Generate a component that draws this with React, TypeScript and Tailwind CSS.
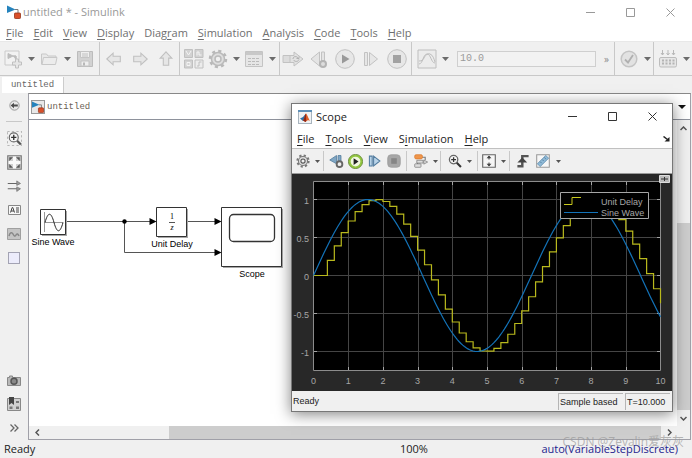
import type { ReactNode } from "react";
import clsx from "clsx";

const menus = ["File", "Edit", "View", "Display", "Diagram", "Simulation", "Analysis", "Code", "Tools", "Help"];

// Underlined letter per menu, when it is not the first one
const mnemonics: Record<string, number> = { Diagram: 4 };

const MenuLabel = ({ text, at }: { text: string; at: number }) => (
  <>
    {text.slice(0, at)}
    <span className="underline underline-offset-2">{text[at]}</span>
    {text.slice(at + 1)}
  </>
);

const Group = ({ children, className }: { children: ReactNode; className?: string }) => (
  <div className={clsx("flex shrink-0 items-center border-r border-[#c8c8c8]", className)}>{children}</div>
);

const Tool = ({ label, className, children }: { label: string; className: string; children: ReactNode }) => (
  <button type="button" aria-label={label} className={clsx("flex shrink-0 items-center justify-center", className)}>
    {children}
  </button>
);

const Caret = ({ label, small }: { label: string; small?: boolean }) => (
  <Tool label={label} className={small ? "h-5 w-2.5" : "h-6 w-3"}>
    <svg width={small ? 5 : 7} height={small ? 3 : 4} viewBox="0 0 7 4">
      <path d="M0 0h7L3.5 4z" fill={small ? "#555" : "#6b6b6b"} />
    </svg>
  </Tool>
);

const Icon = ({ children, size = 20 }: { children: ReactNode; size?: number }) => (
  <svg width={size} height={size} viewBox="0 0 20 20" fill="none">
    {children}
  </svg>
);

const ModelLogo = () => (
  <svg width="14" height="14" viewBox="0 0 14 14">
    <path d="M0 0.5 8.5 4.5 0 8z" fill="#2583bd" />
    <path d="M8 4.5h3v4" fill="none" stroke="#777" />
    <rect x="7.5" y="8" width="6" height="5.5" rx="0.8" fill="#d9502a" stroke="#963418" strokeWidth="0.8" />
  </svg>
);

const MatlabLogo = () => (
  <svg width="14" height="14" viewBox="0 0 14 14">
    <rect x="0.5" y="0.5" width="13" height="13" fill="#f0f2f4" stroke="#a8b4be" />
    <path d="M0 0h14v2H0z" fill="#5d8fb8" />
    <path d="m2 8.5 3-1.5 2.5-3L7 10l-2 1z" fill="#2d6fa8" />
    <path d="M5 10.5C6.5 9 7 4 8 3.5c1 .5 2.5 5 4 7.5-1.5-1-2.5-1-4.500 1z" fill="#e0612b" />
    <path d="M5 10.5C6.5 9 7 4 8 3.5L8.2 11l-.7 1z" fill="#8d2718" />
  </svg>
);

const WindowButtons = ({ color }: { color: string }) => (
  <div className={clsx("flex", color)}>
    <Tool label="Minimize" className="h-6 w-10">
      <svg width="9" height="9" stroke="currentColor"><path d="M0 4.5h9" /></svg>
    </Tool>
    <Tool label="Maximize" className="h-6 w-10">
      <svg width="9" height="9" stroke="currentColor" fill="none"><path d="M.5.5h8v8h-8z" /></svg>
    </Tool>
    <Tool label="Close" className="h-6 w-10">
      <svg width="9" height="9" stroke="currentColor"><path d="m.5.5 8 8m0-8-8 8" /></svg>
    </Tool>
  </div>
);

const MainToolbar = () => (
  <div className="flex h-[35px] border-t border-b border-t-[#e8e8e8] border-b-[#c8c8c8] bg-[#f0f0f0]">
    <Group className="pr-0.5 pl-px">
      <Tool label="New model" className="size-6">
        <Icon>
          <path d="M2 2h14v14H2z" stroke="#cacaca" fill="#f2f2f2" />
          <path d="M5 4.5 10 7 5 9.5zM10 7h3v4" stroke="#bcbcbc" fill="#bcbcbc" />
          <path d="M10 7h3v4" stroke="#bcbcbc" />
          <path d="M12.5 10h3v3h3v3h-3v3h-3v-3h-3v-3h3z" stroke="#c0c0c0" fill="#e6e6e6" />
        </Icon>
      </Tool>
      <Caret label="New options" />
      <Tool label="Open" className="size-6">
        <Icon>
          <path d="M2.5 15.5V5h5L9 7h8v2" stroke="#c8c8c8" fill="#e8e8e8" />
          <path d="M4.500 8.5H18l-1.500 7H3z" stroke="#c8c8c8" fill="#ececec" />
        </Icon>
      </Tool>
      <Caret label="Open options" />
      <Tool label="Save" className="size-6">
        <Icon>
          <path d="M2.5 2.5h15v15h-15z" stroke="#bcbcbc" fill="#d2d2d2" />
          <path d="M5.5 2.500h9v6h-9zM6 12h8v5H6z" fill="#eee" stroke="#c4c4c4" />
          <path d="M7 5h6M7 7h6" stroke="#c0c0c0" />
          <path d="M8 13.5h2v3H8z" fill="#b8b8b8" />
        </Icon>
      </Tool>
    </Group>
    <Group className="pl-px">
      {[0, 180, 90].map((turn) => (
        <Tool key={turn} label={{ 0: "Back", 180: "Forward", 90: "Up to parent" }[turn] as string} className="h-6 w-[26px]">
          <Icon size={18}>
            <path d="M2 10 9 3.500V7h8v6H9v3.500z" transform={`rotate(${turn} 10 10)`} stroke="#c0c0c0" strokeWidth="1.2" fill="#e6e6e6" />
          </Icon>
        </Tool>
      ))}
    </Group>
    <Group className="pr-px pl-0.5">
      <Tool label="Library browser" className="size-6">
        <Icon>
          <path d="M.5.5h8v8h-8zM11 .5h8v8h-8zM.5 11h8v8h-8z" fill="#d2d2d2" stroke="#c0c0c0" />
          <path d="M11 11h8v8h-8z" fill="#ececec" stroke="#c0c0c0" />
          <path d="m2 2 2.5 4L7 2M13 6.500V3h2v3h2.500M3 13.5h3v3H3z" stroke="#f4f4f4" />
          <path d="M13 17h2v-4h2.500" stroke="#c0c0c0" />
        </Icon>
      </Tool>
      <Tool label="Model configuration" className="size-6">
        <Icon>
          <circle cx="10" cy="10" r="8" stroke="#b8b8b8" strokeWidth="2.500" strokeDasharray="3.1 3.18" />
          <circle cx="10" cy="10" r="6.500" fill="#dedede" stroke="#bababa" strokeWidth="1.500" />
          <circle cx="10" cy="10" r="3" fill="#f0f0f0" stroke="#bababa" strokeWidth="1.500" />
        </Icon>
      </Tool>
      <Caret label="Configuration options" />
      <Tool label="Model explorer" className="size-6">
        <Icon>
          <path d="M1.5 2.5h17v15h-17z" fill="#e6e6e6" stroke="#c4c4c4" />
          <path d="M2 4.5h16" stroke="#c8c8c8" strokeWidth="3" />
          <path d="M4 9.5h12M4 12.5h12M4 15.5h12" stroke="#bababa" strokeDasharray="3 1" />
        </Icon>
      </Tool>
      <Caret label="Explorer options" />
    </Group>
    <Group className="pr-px">
      <Tool label="Fast restart" className="h-6 w-[26px]">
        <svg width="22" height="20" viewBox="0 0 22 20" fill="none">
          <path d="M1 6.5h9v7H1z" fill="#dcdcdc" stroke="#c2c2c2" />
          <path d="M8 6.5h4V3l9 7-9 7v-3.500H8z" fill="#e2e2e2" stroke="#c2c2c2" strokeLinejoin="round" />
          <path d="M11 10c0-3 4-3 5-1M17 7.500V9.500h-2.500M17 10.500c-1 2.500-4 2.500-5.500.5" stroke="#b0b0b0" />
        </svg>
      </Tool>
      <Tool label="Step back" className="h-6 w-[26px]">
        <Icon>
          <path d="M2 10 10.5 3v14zM12.5 3h3v9h-3z" fill="#e4e4e4" stroke="#c2c2c2" />
          <circle cx="14" cy="15" r="3" fill="#ddd" stroke="#b4b4b4" strokeWidth="2" />
        </Icon>
      </Tool>
      <Tool label="Run" className="h-6 w-[26px]">
        <Icon>
          <circle cx="10" cy="10" r="9.300" fill="#e7e7e7" stroke="#c0c0c0" />
          <path d="M7 5.5 14.5 10 7 14.5z" fill="#999" />
        </Icon>
      </Tool>
      <Tool label="Step forward" className="h-6 w-[26px]">
        <Icon>
          <path d="M3.500 3.500h3v13h-3zM8.500 3.500l8 6.500-8 6.500z" fill="#e6e6e6" stroke="#c2c2c2" />
        </Icon>
      </Tool>
      <Tool label="Stop" className="h-6 w-[26px]">
        <Icon>
          <circle cx="10" cy="10" r="9.300" fill="#e7e7e7" stroke="#c0c0c0" />
          <path d="M6 6h8v8H6z" fill="#a2a2a2" />
        </Icon>
      </Tool>
    </Group>
    <div className="flex min-w-0 flex-1 items-center border-r border-[#c8c8c8] pl-[3px]">
      <Tool label="Data inspector" className="size-6">
        <Icon>
          <path d="M1 1h18v18H1z" fill="#ececec" stroke="#bebebe" />
          <path d="M2 15C6 15 6 5 10 5s4 9 8 9M2 12c3 0 4-1 5-3s3-5 6-4 4 5 5 8" stroke="#bebebe" />
        </Icon>
      </Tool>
      <Caret label="Inspector options" />
      <input
        aria-label="Simulation stop time"
        defaultValue="10.0"
        className="ml-1.5 h-4 min-w-0 flex-1 border border-[#cfcfcf] bg-[#f2f2f2] px-0.5 font-['Liberation_Mono',monospace] text-[10px] text-[#9a9a9a]"
      />
      <button type="button" aria-label="More" className="w-[18px] pl-2 text-left text-[10px] leading-4 text-[#8a8a8a]">
        »
      </button>
    </div>
    <Group className="pl-0.5">
      <Tool label="Update diagram" className="size-6">
        <Icon>
          <circle cx="10" cy="10" r="7.800" fill="#e2e2e2" stroke="#c4c4c4" strokeWidth="1.500" />
          <path d="m6 10.5 3 3L14 6" stroke="#b0b0b0" strokeWidth="1.800" />
        </Icon>
      </Tool>
      <Caret label="Update options" />
    </Group>
    <div className="flex shrink-0 items-center pl-0.5">
      <Tool label="Build model" className="size-6">
        <Icon>
          <path d="M4.500 1v5M3 4l1.500 2L6 4M10 1v5M8.500 4 10 6l1.500-2M15.500 1v5M14 4l1.500 2L17 4" stroke="#b8b8b8" />
          <rect x="1.500" y="8.500" width="17" height="9.500" rx="1.500" fill="#e6e6e6" stroke="#bcbcbc" />
          <path d="M4 11.5h13M4 14.5h13" stroke="#b4b4b4" strokeWidth="2" strokeDasharray="2 1.5" />
        </Icon>
      </Tool>
      <Caret label="Build options" />
    </div>
  </div>
);

const Palette = () => (
  <aside className="flex w-7 shrink-0 flex-col items-center">
    <Tool label="Hide browser" className="h-6 w-7">
      <Icon size={11}>
        <circle cx="10" cy="10" r="8.500" fill="#e8e8e8" stroke="#8a8a8a" strokeWidth="1.500" />
        <path d="M3 10 9 5v3h7v4H9v3z" fill="#4a4a4a" />
      </Icon>
    </Tool>
    <div className="my-1 h-px w-4 bg-[#c8c8c8]" />
    <Tool label="Zoom" className="h-6 w-7">
      <Icon size={15}>
        <path d="M.5.5h19v19H.5z" stroke="#999" strokeDasharray="3 3" />
        <circle cx="9" cy="8.500" r="6" fill="#f6f6f6" stroke="#666" strokeWidth="1.500" />
        <path d="M9 5v7M5.500 8.500h7" stroke="#333" strokeWidth="1.800" />
        <path d="m13.500 13 5 5" stroke="#555" strokeWidth="3" />
      </Icon>
    </Tool>
    <Tool label="Fit to view" className="h-6 w-7">
      <Icon size={15}>
        <path d="M1 1h18v18H1z" fill="#d0d0d0" stroke="#777" strokeWidth="1.500" />
        <path d="M8 2h4v16H8zM2 8h16v4H2z" fill="#fafafa" />
        <path d="M3 3h5L3 8zM17 3v5l-5-5zM3 17v-5l5 5zM17 17h-5l5-5z" fill="#555" />
      </Icon>
    </Tool>
    <Tool label="Sample time colors" className="h-6 w-7">
      <Icon size={15}>
        <path d="M1 6h16M1 13h16" stroke="#666" strokeWidth="1.500" />
        <path d="m13 2.500 5 3.500-5 2.500zM13 10.500l5 2.500-5 3.500z" fill="#999" stroke="#777" />
      </Icon>
    </Tool>
    <Tool label="Annotation" className="h-6 w-7">
      <svg width="13" height="10" viewBox="0 0 13 10" fill="none">
        <path d="M.5.5h12v9H.5z" fill="#f8f8f8" stroke="#888" />
        <path d="m2.500 7.500 1.700-5h.6l1.700 5M3 6h3M8 3h3M8 5h3M8 7h3" stroke="#444" />
      </svg>
    </Tool>
    <Tool label="Image" className="h-6 w-7">
      <svg width="14" height="12" viewBox="0 0 14 12" fill="none">
        <path d="M.5.5h13v11H.5z" fill="#c4c4c4" stroke="#a0a0a0" />
        <path d="M2 8c1-4 3-4 4-2s2 3 3 1 2-1 3 1" stroke="#888" strokeWidth="1.500" />
      </svg>
    </Tool>
    <Tool label="Area" className="h-6 w-7">
      <span className="size-3 border border-[#a3a3b3] bg-[#ececfb]" />
    </Tool>
    <div className="flex-1" />
    <Tool label="Snapshot" className="h-6 w-7">
      <svg width="14" height="11" viewBox="0 0 14 11" fill="none">
        <path d="M.5 2.500h2V1h3v1.500h8v8H.5z" fill="#b8b8b8" stroke="#888" />
        <circle cx="7" cy="6.300" r="3" fill="#888" stroke="#555" strokeWidth="1.500" />
      </svg>
    </Tool>
    <Tool label="Bookmarks" className="h-6 w-7">
      <svg width="14" height="14" viewBox="0 0 14 14" fill="none">
        <path d="M.5 1.500h13v12H.5z" fill="#d0d0d0" stroke="#888" />
        <path d="M9 4h3v2H9zM2.500 9.500h3V12h-3zM9 9.500h3V12H9z" fill="#777" />
        <path d="M2 0h5v8L4.500 6 2 8z" fill="#444" />
      </svg>
    </Tool>
    <Tool label="More tools" className="h-6 w-7">
      <svg width="9" height="8" viewBox="0 0 9 8" fill="none" stroke="#666" strokeWidth="1.300">
        <path d="m.5.5 3.500 3.500L.5 7.500m4-7L8 4 4.500 7.500" />
      </svg>
    </Tool>
  </aside>
);

const Diagram = () => (
  <svg width="260" height="170" viewBox="0 0 260 170" className="font-['Liberation_Sans',Arial,sans-serif]" fontSize="9" textAnchor="middle">
    {/* block shadows */}
    <path d="M13 91h25v25H13zM129 89h30v29h-30zM194 89h60v59h-60z" fill="#a8a8a8" />
    <g fill="#fff" stroke="#333">
      <path d="M11.500 89.500h25v25h-25zM127.500 87.500h30v29h-30zM192.500 87.500h60v59h-60z" />
      <rect x="200.500" y="94.500" width="45" height="27" rx="4" strokeWidth="1.300" />
    </g>
    <path d="M15.500 92v20M15 102.500h19" stroke="#999" />
    <path d="M16 102.500c3-11 6-11 9 0s6 11 9 0" fill="none" stroke="#222" />
    <path d="M38 101.500h84M95.500 101.500v31h93M159 101.500h30" fill="none" stroke="#555" />
    <circle cx="95.500" cy="101.500" r="2.200" />
    <path d="m120.500 98 7 3.500-7 3.500zM185.500 98l7 3.500-7 3.500zM185.500 129l7 3.500-7 3.500z" />
    <g className="font-['Liberation_Serif',serif]" fontSize="8">
      <text x="143" y="99">1</text>
      <path d="M140 102.500h6" stroke="#555" />
      <text x="143" y="110" fontStyle="italic">z</text>
    </g>
    <text x="24" y="125">Sine Wave</text>
    <text x="143" y="127">Unit Delay</text>
    <text x="223" y="157">Scope</text>
  </svg>
);

const plotX = (t: number) => 21.5 + t * 34.7;
const plotY = (v: number) => 101.5 - v * 76;

const sinePath = Array.from({ length: 201 }, (_, i) => `${plotX(i / 20)},${plotY(Math.sin(i / 20))}`).join(" ");

// sampled every 0.2 s and held one sample late
const delayPath = Array.from({ length: 51 }, (_, k) => {
  const held = (n: number) => plotY(n < 1 ? 0 : Math.sin((n - 1) * 0.2));
  return `${k ? `H${plotX(k * 0.2)}V` : `M${plotX(0)} `}${held(k)}`;
}).join("");

const Plot = () => (
  <svg viewBox="0 0 380 217" className="block w-full bg-[#282828] font-['Liberation_Sans',Arial,sans-serif]" fontSize="9" fill="#a6a6a6">
    <path d="M21.500 7.500h347v189h-347z" fill="#000" />
    <g stroke="#454545">
      {[1, 2, 3, 4, 5, 6, 7, 8, 9].map((t) => (
        <path key={t} d={`M${Math.round(plotX(t)) + 0.5} 8v188`} />
      ))}
      {[1, 0.5, 0, -0.5, -1].map((v) => (
        <path key={v} d={`M22 ${plotY(v)}h346`} />
      ))}
    </g>
    <path d="M21.500 7.500h347v189h-347z" fill="none" stroke="#8c8c8c" />
    <g stroke="#a6a6a6">
      {[1, 2, 3, 4, 5, 6, 7, 8, 9].map((t) => (
        <path key={t} d={`M${Math.round(plotX(t)) + 0.5} 8v3m0 182v3`} />
      ))}
      {[1, 0.5, 0, -0.5, -1].map((v) => (
        <path key={v} d={`M22 ${plotY(v)}h3m340 0h3`} />
      ))}
    </g>
    <path d={delayPath} fill="none" stroke="#b9b91d" strokeWidth="1.200" />
    <polyline points={sinePath} fill="none" stroke="#1373b8" strokeWidth="1.200" />
    <g textAnchor="middle">
      {[0, 1, 2, 3, 4, 5, 6, 7, 8, 9, 10].map((t) => (
        <text key={t} x={plotX(t)} y="210">{t}</text>
      ))}
    </g>
    <g textAnchor="end">
      {[1, 0.5, 0, -0.5, -1].map((v) => (
        <text key={v} x="17" y={plotY(v) + 4}>{v}</text>
      ))}
    </g>
    {/* legend */}
    <path d="M268.500 18.500h88v26h-88z" fill="#000" stroke="#a6a6a6" />
    <path d="M272 30.500h8v-7h9" fill="none" stroke="#c9c91d" />
    <path d="M272 38.500h34" stroke="#1373b8" />
    <text x="309" y="31">Unit Delay</text>
    <text x="309" y="42">Sine Wave</text>
    <path d="M367.500 1.500h10v7h-10z" fill="#bbb" stroke="#ddd" />
    <path d="M369 5h7M372.500 3v4" stroke="#333" />
  </svg>
);

const ScopeWindow = () => (
  <section className="absolute top-[103px] right-[19px] w-[382px] border border-[#777] bg-white shadow-[0_2px_14px_rgba(0,0,0,0.5)]">
    <header className="flex h-[25px] items-center pl-[6px]">
      <MatlabLogo />
      <h2 className="flex-1 pl-1 text-[11px] text-[#222]">Scope</h2>
      <WindowButtons color="text-[#333]" />
    </header>
    <nav className="flex h-5 items-center border-b border-[#c0c0c0] pl-[5px] text-[#222]">
      <div className="flex flex-1 gap-[11px]">
        {["File", "Tools", "View", "Simulation", "Help"].map((m) => (
          <button key={m} type="button">
            <MenuLabel text={m} at={m === "Simulation" ? 1 : 0} />
          </button>
        ))}
      </div>
      <Tool label="Dock" className="h-5 w-3">
        <svg width="7" height="6" viewBox="0 0 7 6">
          <path d="m.5.5 4 3" stroke="#222" strokeWidth="1.500" />
          <path d="M6.500 1v4.500H1.500z" fill="#222" />
        </svg>
      </Tool>
    </nav>
    <div className="flex h-[25px] border-b border-[#9a9a9a] bg-[#f0f0f0] py-0.5">
      <Group className="px-px">
        <Tool label="Settings" className="h-5 w-[19px]">
          <Icon size={14}>
            <circle cx="10" cy="10" r="8" stroke="#777" strokeWidth="3" strokeDasharray="3.1 3.18" />
            <circle cx="10" cy="10" r="6.500" fill="#ddd" stroke="#777" strokeWidth="1.500" />
            <circle cx="10" cy="10" r="3" fill="#f0f0f0" stroke="#555" strokeWidth="1.500" />
          </Icon>
        </Tool>
        <Caret small label="Settings options" />
      </Group>
      <Group className="px-[3px]">
        <Tool label="Step back" className="h-5 w-[19px]">
          <Icon size={15}>
            <path d="M1 8 10 2v11zM12 2h4v9h-4z" fill="#7fa6c4" stroke="#50799a" />
            <circle cx="14" cy="13.500" r="3.800" fill="#eee" stroke="#666" strokeWidth="2.500" />
          </Icon>
        </Tool>
        <Tool label="Run" className="h-5 w-[19px]">
          <Icon size={15}>
            <circle cx="10" cy="10" r="8" fill="#f1f8e0" stroke="#93c740" strokeWidth="3" />
            <circle cx="10" cy="10" r="9.500" stroke="#5b7d2c" />
            <path d="m7.500 5.500 6.500 4.500-6.500 4.500z" fill="#222" />
          </Icon>
        </Tool>
        <Tool label="Step forward" className="h-5 w-[19px]">
          <Icon size={14}>
            <path d="M2 3h4v14H2zM8 3l9 7-9 7z" fill="#b8d3e8" stroke="#527c9f" strokeWidth="1.500" />
          </Icon>
        </Tool>
        <Tool label="Stop" className="h-5 w-[19px]">
          <Icon size={14}>
            <rect x="1" y="1" width="18" height="18" rx="5" fill="#a6a6a6" stroke="#9a9a9a" />
            <path d="M6 6h8v8H6z" fill="#858585" />
          </Icon>
        </Tool>
      </Group>
      <Group className="pl-1">
        <Tool label="Signal selector" className="h-5 w-[19px]">
          <Icon size={14}>
            <path d="M11 4.500h5v4M5 10v5.500" stroke="#777" strokeWidth="1.500" />
            <rect x="1" y="1" width="11" height="6" rx="2" fill="#f0964b" stroke="#d9782c" />
            <rect x="1" y="14" width="9" height="5" rx="1" fill="#ddd" stroke="#777" />
            <path d="M4 9h9v4H4zM14 8.500l5.500 3-5.500 3z" fill="#ddd" stroke="#777" />
          </Icon>
        </Tool>
        <Caret small label="Signal options" />
      </Group>
      <Group className="pr-[3px] pl-1">
        <Tool label="Zoom" className="h-5 w-[19px]">
          <Icon size={14}>
            <circle cx="8" cy="8" r="6" fill="#f4f4f4" stroke="#666" strokeWidth="1.800" />
            <path d="M8 4.500v7M4.500 8h7" stroke="#333" strokeWidth="1.800" />
            <path d="m12.500 12.500 6 6" stroke="#333" strokeWidth="3" />
          </Icon>
        </Tool>
        <Caret small label="Zoom options" />
      </Group>
      <Group className="px-px">
        <Tool label="Scale axes" className="h-5 w-[19px]">
          <Icon size={14}>
            <path d="M1 1h18v18H1z" fill="#f6f6f6" stroke="#666" strokeWidth="1.600" />
            <path d="M10 3v5M10 12v5" stroke="#444" strokeWidth="1.500" />
            <path d="m10 2 3.500 4h-7zM10 18l3.500-4h-7z" fill="#444" />
          </Icon>
        </Tool>
        <Caret small label="Scale options" />
      </Group>
      <div className="flex items-center pl-[3px]">
        <Tool label="Triggers" className="h-5 w-[19px]">
          <Icon size={14}>
            <path d="M2 17.500h7V3h9" stroke="#555" strokeWidth="3.500" />
            <path d="M2 12 9 5l7 7z" fill="#444" />
          </Icon>
        </Tool>
        <Tool label="Measurements" className="h-5 w-[21px]">
          <Icon size={14}>
            <path d="M1 1h18v18H1z" fill="#f6f6f6" stroke="#999" strokeWidth="1.500" />
            <path d="M2 14 14 2l4 4L6 18z" fill="#8fb9d6" stroke="#4c7fa6" />
            <path d="m6 11 2 2m1-5 2 2m1-5 2 2" stroke="#3b6a8f" />
          </Icon>
        </Tool>
        <Caret small label="Measurement options" />
      </div>
    </div>
    <Plot />
    <footer className="flex h-5 items-center gap-0.5 bg-[#f0f0f0] pr-0.5 font-['Liberation_Sans',Arial,sans-serif] text-[9px] leading-4 text-[#222]">
      <span className="flex-1 pl-px">Ready</span>
      <span className="w-[65px] border-t border-l border-[#b5b5b5] pl-px">Sample based</span>
      <span className="w-[45px] border-t border-l border-[#b5b5b5] pl-px">T=10.000</span>
    </footer>
  </section>
);

const App = () => {
  return (
    <div className="relative flex min-h-screen flex-col bg-[#f0f0f0] font-['Open_Sans','Noto_Sans_CJK_SC',sans-serif] text-[11px] leading-4">
      <header className="flex h-6 items-center bg-white pr-0.5 pl-[7px]">
        <ModelLogo />
        <h1 className="flex-1 pl-0.5 text-[11px] text-[#999]">untitled * - Simulink</h1>
        <WindowButtons color="text-[#999]" />
      </header>
      <nav className="flex h-[17px] items-center gap-2.5 bg-white pl-1.5 text-[#6f6f6f]">
        {menus.map((m) => (
          <button key={m} type="button">
            <MenuLabel text={m} at={mnemonics[m] ?? 0} />
          </button>
        ))}
      </nav>
      <MainToolbar />
      <div className="flex h-[17px] items-end pl-0.5 font-['Liberation_Mono',monospace] text-[9px] text-[#666]">
        <button type="button" className="h-4 w-[62px] border-r border-[#ccc] bg-white">
          untitled
        </button>
      </div>

      <div className="flex flex-1 pr-px">
        <Palette />
        <main className="flex min-w-0 flex-1 flex-col border border-[#a0a0a8] border-t-[#888] bg-white">
          <div className="flex h-[26px] items-center border-b border-[#8e929c] pl-0.5">
            <span className="flex size-[14px] items-center justify-center border border-[#999] bg-[#e8e8e8]">
              <ModelLogo />
            </span>
            <a href="#untitled" className="flex-1 pl-0.5 font-['Liberation_Mono',monospace] text-[9px] text-[#6b5f55]">
              untitled
            </a>
            <Tool label="Path history" className="h-5 w-4">
              <svg width="8" height="4"><path d="M0 0h8L4 4z" fill="#111" /></svg>
            </Tool>
          </div>
          <div className="flex flex-1">
            <div className="min-w-0 flex-1">
              <Diagram />
            </div>
            <div className="flex w-[13px] flex-col bg-[#f0f0f0]">
              <Tool label="Scroll up" className="h-4 w-full">
                <svg width="7" height="5" fill="none" stroke="#555" strokeWidth="1.500"><path d="m.5 4 3-3 3 3" /></svg>
              </Tool>
              <div className="flex flex-1 flex-col">
                <div className="flex-[87]" />
                <div className="flex-[187] bg-[#cdcdcd]" />
              </div>
              <Tool label="Scroll down" className="h-4 w-full">
                <svg width="7" height="5" fill="none" stroke="#555" strokeWidth="1.500"><path d="m.5 1 3 3 3-3" /></svg>
              </Tool>
            </div>
          </div>
          <div className="flex h-[13px] bg-[#f0f0f0] pr-[13px]">
            <Tool label="Scroll left" className="h-full w-4">
              <svg width="5" height="7" fill="none" stroke="#555" strokeWidth="1.500"><path d="m4 .5-3 3 3 3" /></svg>
            </Tool>
            <div className="flex flex-1">
              <div className="flex-[124]" />
              <div className="flex-[494] bg-[#cdcdcd]" />
            </div>
            <Tool label="Scroll right" className="h-full w-4">
              <svg width="5" height="7" fill="none" stroke="#555" strokeWidth="1.500"><path d="m1 .5 3 3-3 3" /></svg>
            </Tool>
          </div>
        </main>
      </div>

      <footer className="grid h-[18px] grid-cols-[396px_1fr_auto] items-center pr-[14px] pl-1 text-[#222]">
        <span>Ready</span>
        <span>100%</span>
        <span className="text-[#24248e]">auto(VariableStepDiscrete)</span>
      </footer>
      <p className="absolute right-2 bottom-1.5 text-xs leading-5 text-[#999]/70">CSDN @Zevalin爱灰灰</p>
      <ScopeWindow />
    </div>
  );
};

export default App;
